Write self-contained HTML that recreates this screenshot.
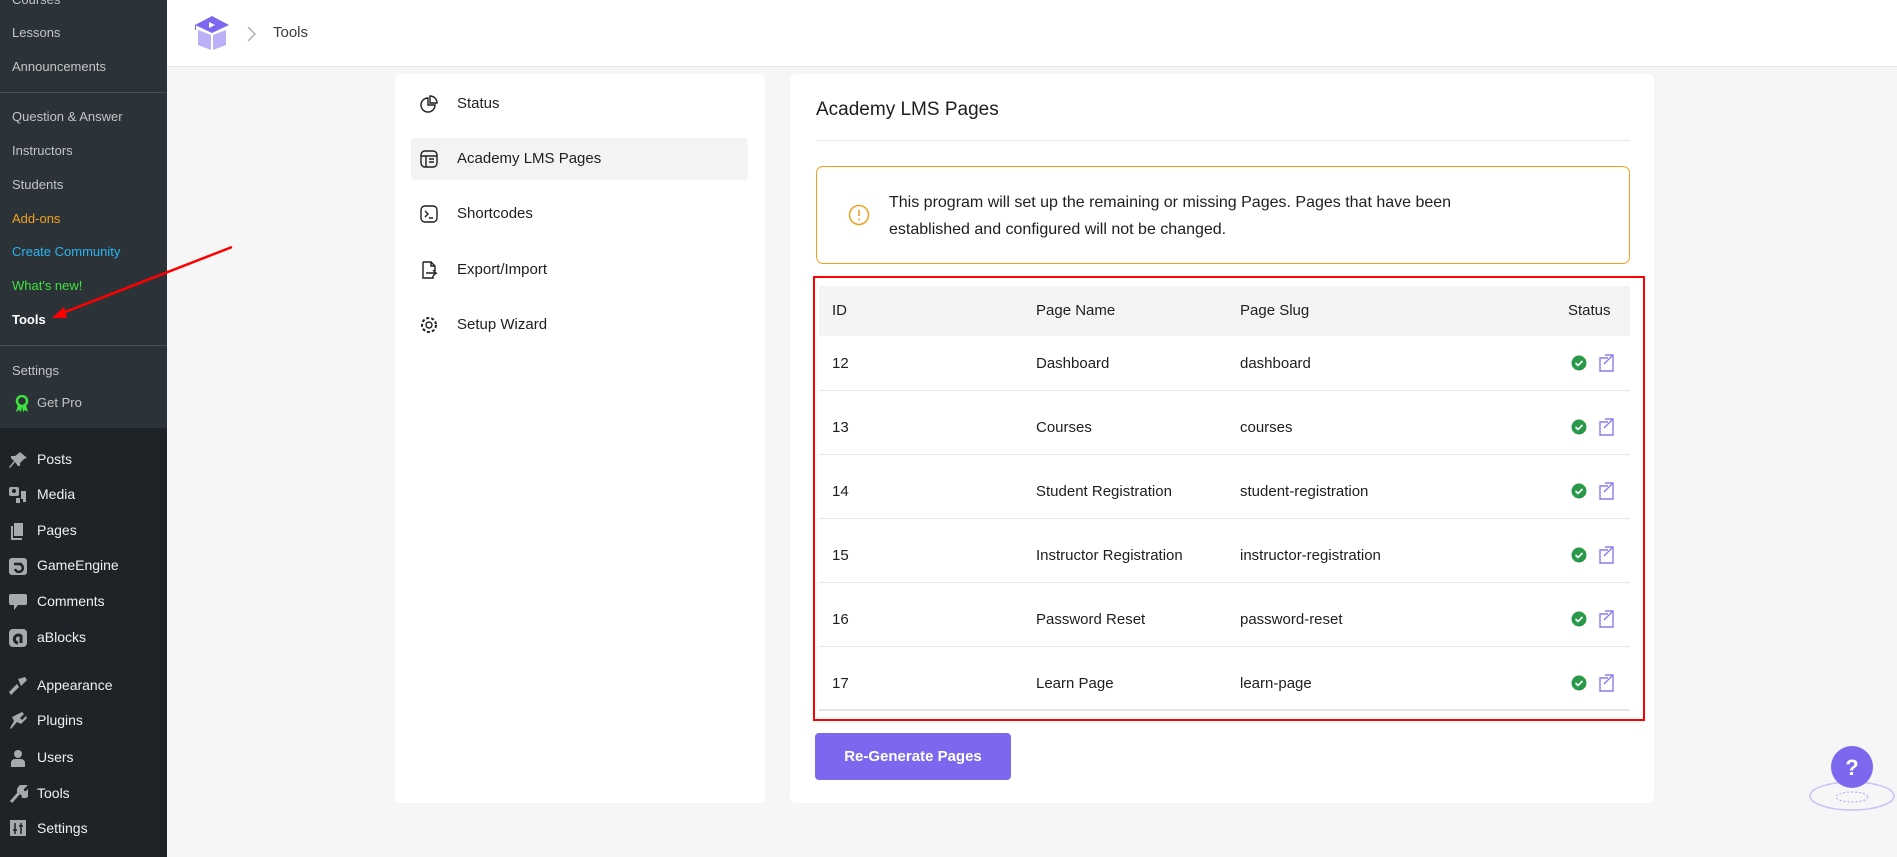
<!DOCTYPE html>
<html><head><meta charset="utf-8"><style>
*{box-sizing:border-box;margin:0;padding:0}
body{width:1897px;height:857px;overflow:hidden;background:#f6f6f6;font-family:"Liberation Sans",sans-serif;position:relative;color:#1e1e1e}
.abs{position:absolute}
#sb{left:0;top:0;width:167px;height:857px;background:#1d2327}
#sub{left:0;top:0;width:167px;height:428px;background:#2c3338}
.si{position:absolute;left:12px;font-size:13px;color:#c3c4c7;line-height:16px}
.mi{position:absolute;left:37px;font-size:14px;color:#f0f0f1;line-height:18px}
.ic{position:absolute;left:8px;width:20px;height:18px}
.hr{position:absolute;left:0;width:167px;height:1px;background:#4a5056}
#hdr{left:167px;top:0;width:1730px;height:67px;background:#fff;border-bottom:1px solid #e6e6e6}
.card{background:#fff;border-radius:6px}
.mt{position:absolute;left:62px;font-size:15px;color:#1e1e1e;line-height:18px}
.mic{position:absolute;left:24px;width:20px;height:20px}
.row{position:absolute;left:819px;width:811px;height:64px;border-bottom:1px solid #e6e6e6}
.row span{position:absolute;top:28px;font-size:15px;line-height:18px}
</style></head><body>
<div id="sb" class="abs"></div>
<div id="sub" class="abs"></div>
<div class="si" style="top:-8px">Courses</div>
<div class="si" style="top:25px">Lessons</div>
<div class="si" style="top:59px">Announcements</div>
<div class="hr" style="top:92px"></div>
<div class="si" style="top:109px">Question &amp; Answer</div>
<div class="si" style="top:143px">Instructors</div>
<div class="si" style="top:177px">Students</div>
<div class="si" style="top:211px;color:#f0a020">Add-ons</div>
<div class="si" style="top:244px;color:#2ab4f0">Create Community</div>
<div class="si" style="top:278px;color:#3ee23e">What's new!</div>
<div class="si" style="top:312px;color:#fff;font-weight:bold">Tools</div>
<div class="hr" style="top:345px"></div>
<div class="si" style="top:363px">Settings</div>
<svg class="abs" style="left:14px;top:395px" width="16" height="18" viewBox="0 0 16 18"><circle cx="8" cy="6" r="5" fill="none" stroke="#3ee23e" stroke-width="2.5"/><path d="M4 10 L2 17 L5 15 L7 17 L8 11 M12 10 L14 17 L11 15 L9 17 L8 11" fill="#3ee23e"/></svg>
<div class="si" style="top:395px;left:37px">Get Pro</div>

<svg class="ic" style="top:451px" viewBox="0 0 20 18"><path d="M12 1 L19 7 L16 8 L12 12 L12 15 L10 15 L7 11 L2 17 L1 16 L6 10 L3 7 L3 5 L7 5 L11 2 Z" fill="#a7aaad"/></svg>
<div class="mi" style="top:450px">Posts</div>
<svg class="ic" style="top:486px" viewBox="0 0 20 18"><rect x="1" y="1" width="10" height="9" rx="2" fill="#a7aaad"/><circle cx="6" cy="5" r="2" fill="#1d2327"/><path d="M13 5 h5 v11 h-3 v-3 h-2 Z M8 12 h4 v5 h-4z" fill="#a7aaad"/></svg>
<div class="mi" style="top:485px">Media</div>
<svg class="ic" style="top:522px" viewBox="0 0 20 18"><path d="M6 1h9v13H6z M3 4h2v12h9v2H3z" fill="#a7aaad"/></svg>
<div class="mi" style="top:521px">Pages</div>
<svg class="ic" style="top:557px" viewBox="0 0 20 18"><rect x="1" y="1" width="18" height="17" rx="3" fill="#a7aaad"/><path d="M6 7 h8 M10 7 a4 4 0 1 1 -3 5" stroke="#1d2327" stroke-width="2.5" fill="none"/></svg>
<div class="mi" style="top:556px">GameEngine</div>
<svg class="ic" style="top:593px" viewBox="0 0 20 18"><path d="M3 1h14a2 2 0 0 1 2 2v7a2 2 0 0 1-2 2H10l-4 5v-5H3a2 2 0 0 1-2-2V3a2 2 0 0 1 2-2z" fill="#a7aaad"/></svg>
<div class="mi" style="top:592px">Comments</div>
<svg class="ic" style="top:629px" viewBox="0 0 20 18"><rect x="1" y="0" width="18" height="18" rx="4" fill="#a7aaad"/><path d="M13 14 V7 a4 4 0 1 0 -3 7" stroke="#1d2327" stroke-width="3" fill="none"/></svg>
<div class="mi" style="top:628px">aBlocks</div>
<svg class="ic" style="top:677px" viewBox="0 0 20 18"><path d="M10 2 L17 0 L19 3 L13 9 Z M1 15 L9 7 L11 10 L3 18 Z" fill="#a7aaad"/></svg>
<div class="mi" style="top:676px">Appearance</div>
<svg class="ic" style="top:712px" viewBox="0 0 20 18"><path d="M14 0 L16 2 L12 6 L14 8 L18 4 L19 6 L13 12 L9 10 L3 17 L2 16 L6 9 L4 5 Z" fill="#a7aaad"/></svg>
<div class="mi" style="top:711px">Plugins</div>
<svg class="ic" style="top:749px" viewBox="0 0 20 18"><circle cx="10" cy="5" r="4" fill="#a7aaad"/><path d="M3 18 v-4 a4 4 0 0 1 4 -4 h6 a4 4 0 0 1 4 4 v4 z" fill="#a7aaad"/></svg>
<div class="mi" style="top:748px">Users</div>
<svg class="ic" style="top:785px" viewBox="0 0 20 18"><path d="M3 17 L11 8 M11 8 a5 5 0 0 1 6 -7 l-3 3 1 3 3 1 3-3 a5 5 0 0 1 -7 6" stroke="#a7aaad" stroke-width="3" fill="#a7aaad"/></svg>
<div class="mi" style="top:784px">Tools</div>
<svg class="ic" style="top:820px" viewBox="0 0 20 18"><rect x="2" y="0" width="16" height="16" fill="#a7aaad"/><path d="M7 3v11 M13 3v11 M5 10h4 M11 6h4" stroke="#1d2327" stroke-width="1.5"/></svg>
<div class="mi" style="top:819px">Settings</div>

<svg class="abs" style="left:0;top:230px" width="240" height="100"><path d="M232 17 L60 84" stroke="#ff0000" stroke-width="2.5"/><path d="M52 88 L64 77 L67 88 Z" fill="#ff0000"/></svg>

<div id="hdr" class="abs"></div>
<svg class="abs" style="left:192px;top:14px" width="40" height="38" viewBox="0 0 40 38"><path d="M20 2 L37 11 L20 19 L3 11 Z" fill="#7b68ee"/><path d="M3 11 v5 l1 0 v-5z" fill="#7b68ee"/><path d="M17 8 L23 11 L17 14 Z" fill="#fff"/><path d="M6 16 L19 21 L19 36 L6 31 Z" fill="#b9b0f5"/><path d="M21 21 L34 16 L34 31 L21 36 Z" fill="#b9b0f5"/></svg>
<svg class="abs" style="left:246px;top:26px" width="12" height="16"><path d="M2 1 L9 8 L2 15" stroke="#b0b0b0" stroke-width="1.5" fill="none"/></svg>
<div class="abs" style="left:273px;top:24px;font-size:15px;color:#3c3c3c">Tools</div>

<div class="abs card" style="left:395px;top:74px;width:370px;height:729px">
 <div class="abs" style="left:16px;top:64px;width:337px;height:42px;background:#f3f3f3;border-radius:4px"></div>
 <svg class="mic" style="top:20px" viewBox="0 0 20 20"><path d="M9 4 a7 7 0 1 0 7 7 h-7z" fill="none" stroke="#1e1e1e" stroke-width="1.4"/><path d="M11 2 a7 7 0 0 1 7 7 h-7z" fill="none" stroke="#1e1e1e" stroke-width="1.4"/></svg>
 <div class="mt" style="top:21px">Status</div>
 <svg class="mic" style="top:75px" viewBox="0 0 20 20"><rect x="2" y="2" width="16" height="16" rx="4" fill="none" stroke="#1e1e1e" stroke-width="1.4"/><path d="M2 7h16 M7 7v11 M10 10h5 M10 13h5" stroke="#1e1e1e" stroke-width="1.4"/></svg>
 <div class="mt" style="top:76px">Academy LMS Pages</div>
 <svg class="mic" style="top:130px" viewBox="0 0 20 20"><rect x="2" y="2" width="16" height="16" rx="4" fill="none" stroke="#1e1e1e" stroke-width="1.4"/><path d="M6 7 l3 3 -3 3 M10 14h4" stroke="#1e1e1e" stroke-width="1.4" fill="none"/></svg>
 <div class="mt" style="top:131px">Shortcodes</div>
 <svg class="mic" style="top:186px" viewBox="0 0 20 20"><path d="M4 2 h8 l4 4 v5 M4 2 v16 h10 v-2 M12 2 v4 h4 M7 13 h10 l-3 -3 M17 13 l-3 3" fill="none" stroke="#1e1e1e" stroke-width="1.4"/></svg>
 <div class="mt" style="top:187px">Export/Import</div>
 <svg class="mic" style="top:241px" viewBox="0 0 20 20"><circle cx="10" cy="10" r="3" fill="none" stroke="#1e1e1e" stroke-width="1.4"/><circle cx="10" cy="10" r="7" fill="none" stroke="#1e1e1e" stroke-width="2" stroke-dasharray="3 2"/></svg>
 <div class="mt" style="top:242px">Setup Wizard</div>
</div>

<div class="abs card" style="left:790px;top:74px;width:864px;height:729px"></div>
<div class="abs" style="left:816px;top:99px;font-size:19px;color:#1e1e1e">Academy LMS Pages</div>
<div class="abs" style="left:816px;top:140px;width:814px;height:1px;background:#e6e6e6"></div>
<div class="abs" style="left:816px;top:166px;width:814px;height:98px;border:1px solid #f0a020;border-radius:7px"></div>
<svg class="abs" style="left:848px;top:204px" width="22" height="22"><circle cx="11" cy="11" r="9.5" fill="none" stroke="#f0a020" stroke-width="1.5"/><path d="M11 6v6" stroke="#f0a020" stroke-width="1.6"/><circle cx="11" cy="15.5" r="1" fill="#f0a020"/></svg>
<div class="abs" style="left:889px;top:189px;font-size:16px;line-height:27px;color:#1e1e1e;width:610px">This program will set up the remaining or missing Pages. Pages that have been established and configured will not be changed.</div>

<div class="abs" style="left:819px;top:286px;width:811px;height:50px;background:#f4f4f4"></div>
<div class="abs" style="left:832px;top:302px;font-size:15px">ID</div>
<div class="abs" style="left:1036px;top:302px;font-size:15px">Page Name</div>
<div class="abs" style="left:1240px;top:302px;font-size:15px">Page Slug</div>
<div class="abs" style="left:1568px;top:302px;font-size:15px">Status</div>

<div class="row" style="top:336px;height:55px"><span style="left:13px;top:19px">12</span><span style="left:217px;top:19px">Dashboard</span><span style="left:421px;top:19px">dashboard</span></div>
<div class="row" style="top:391px"><span style="left:13px">13</span><span style="left:217px">Courses</span><span style="left:421px">courses</span></div>
<div class="row" style="top:455px"><span style="left:13px">14</span><span style="left:217px">Student Registration</span><span style="left:421px">student-registration</span></div>
<div class="row" style="top:519px"><span style="left:13px">15</span><span style="left:217px">Instructor Registration</span><span style="left:421px">instructor-registration</span></div>
<div class="row" style="top:583px"><span style="left:13px">16</span><span style="left:217px">Password Reset</span><span style="left:421px">password-reset</span></div>
<div class="row" style="top:647px;border-bottom:2px solid #e4e4e4"><span style="left:13px">17</span><span style="left:217px">Learn Page</span><span style="left:421px">learn-page</span></div>

<svg class="abs" style="left:1570px;top:350px" width="50" height="345">
<defs><g id="st"><circle cx="9" cy="13" r="7.5" fill="#2a9a4a"/><path d="M5.5 13 l2.5 2.5 4.5 -4.5" stroke="#fff" stroke-width="1.6" fill="none"/><path d="M38 8 h-8 v13 h13 v-8 M35 5 h8 v8 M43 5 l-9 9" stroke="#8c7cf0" stroke-width="1.4" fill="none"/></g></defs>
<use href="#st" y="0"/><use href="#st" y="64"/><use href="#st" y="128"/><use href="#st" y="192"/><use href="#st" y="256"/><use href="#st" y="320"/>
</svg>
<div class="abs" style="left:813px;top:276px;width:832px;height:445px;border:2.5px solid #ff0000"></div>

<div class="abs" style="left:815px;top:733px;width:196px;height:47px;background:#7b68ee;border-radius:4px;color:#fff;font-size:15px;font-weight:bold;text-align:center;line-height:47px">Re-Generate Pages</div>

<svg class="abs" style="left:1805px;top:742px" width="92" height="70"><ellipse cx="47" cy="54" rx="42" ry="14" fill="none" stroke="#c9c0f8" stroke-width="1.5"/><ellipse cx="47" cy="55" rx="16" ry="5" fill="none" stroke="#b0a4f5" stroke-dasharray="2 2"/><circle cx="47" cy="25" r="21" fill="#7b68ee"/><text x="47" y="33" text-anchor="middle" font-family="Liberation Sans" font-weight="bold" font-size="22" fill="#fff">?</text></svg>
</body></html>
